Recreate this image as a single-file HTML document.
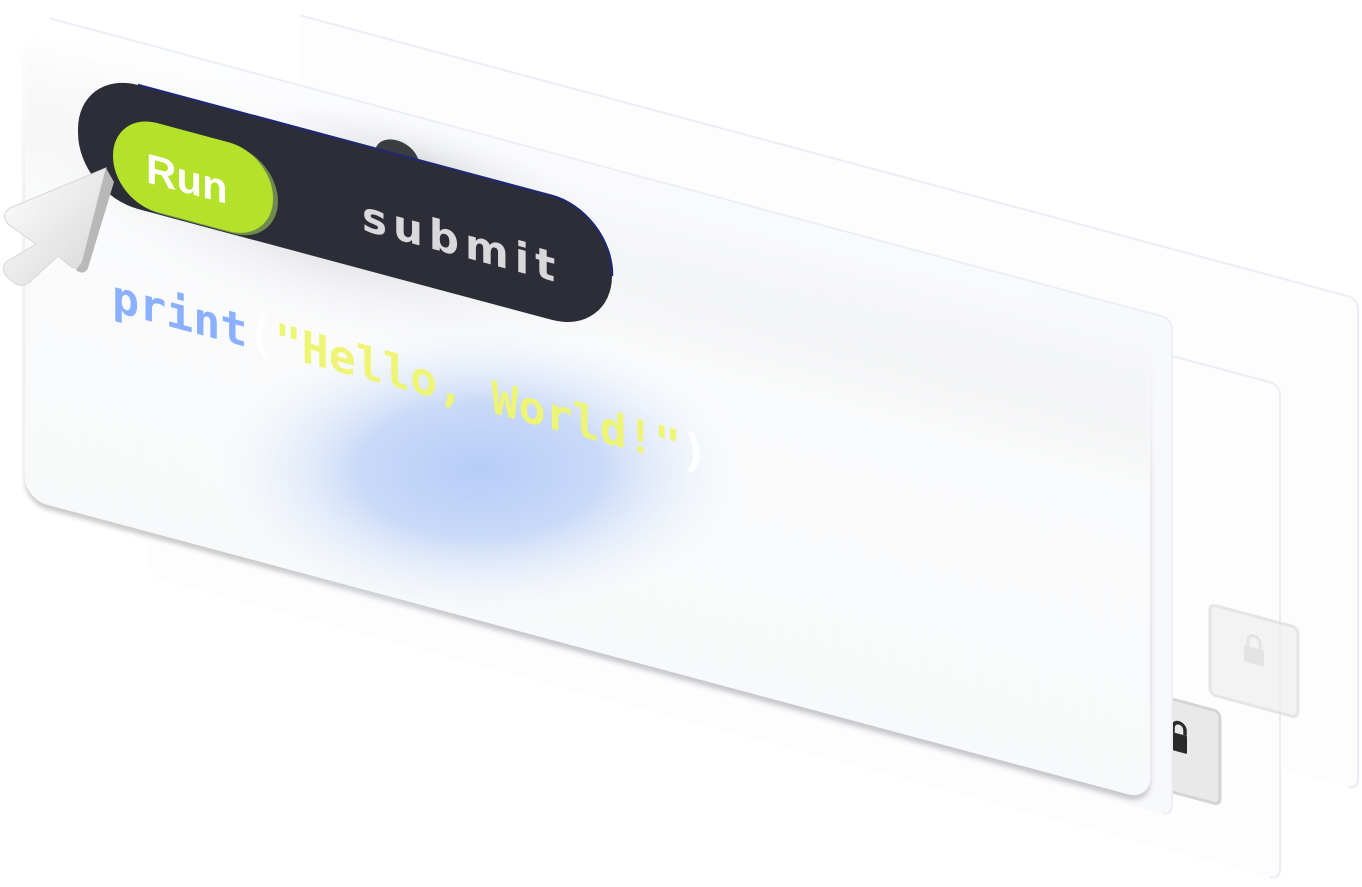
<!DOCTYPE html>
<html><head><meta charset="utf-8"><style>
html,body{margin:0;padding:0;background:#fff;width:1362px;height:887px;overflow:hidden}
svg{display:block}
</style></head><body>
<svg width="1362" height="887" viewBox="0 0 1362 887" xmlns="http://www.w3.org/2000/svg">
<defs>
<radialGradient id="blue" cx="0.5" cy="0.5" r="0.5">
<stop offset="0" stop-color="#b6cdf8"/><stop offset="0.45" stop-color="#c9daf8"/><stop offset="1" stop-color="#f4f7fc" stop-opacity="0"/>
</radialGradient>
<radialGradient id="gshadow" cx="0.5" cy="0.5" r="0.5">
<stop offset="0" stop-color="#dcdddf"/><stop offset="1" stop-color="#f4f5f7" stop-opacity="0"/>
</radialGradient>
<linearGradient id="fadeL" x1="0" y1="0" x2="1" y2="0">
<stop offset="0" stop-color="#ffffff"/><stop offset="0.3" stop-color="#fafbfd"/><stop offset="1" stop-color="#f8f9fb"/>
</linearGradient>
<linearGradient id="cardV" x1="0" y1="0" x2="0" y2="1">
<stop offset="0" stop-color="#fafbfc" stop-opacity="0"/><stop offset="0.35" stop-color="#fafbfc" stop-opacity="1"/><stop offset="1" stop-color="#f8f9fa"/>
</linearGradient>
<filter id="sh" x="-5%" y="-5%" width="110%" height="115%"><feDropShadow dx="0" dy="5" stdDeviation="2.5" flood-color="#000" flood-opacity="0.2"/></filter>
<linearGradient id="cur" x1="0" y1="0" x2="1" y2="1">
<stop offset="0" stop-color="#ffffff"/><stop offset="1" stop-color="#d6d6d6"/>
</linearGradient>
</defs>
<g transform="matrix(1,0.2679,0,1,0,0)">
<rect x="300" y="-65" width="1058" height="491" rx="10" fill="#fdfdfe"/>
<path d="M300 -65 H1348 a10 10 0 0 1 10 10 V416 a10 10 0 0 1 -10 10" fill="none" stroke="#ececf7" stroke-width="2"/>
<rect x="150" y="42" width="1130" height="495" rx="10" fill="#fdfdfe"/>
<path d="M150 42 H1270 a10 10 0 0 1 10 10 V527 a10 10 0 0 1 -10 10" fill="none" stroke="#ececf6" stroke-width="2"/>
<rect x="1210" y="280" width="88" height="90" rx="6" fill="#efefef" stroke="#dcdcdc" stroke-width="3" opacity="0.7"/>
<rect x="1244" y="312" width="20" height="16" rx="1" fill="#e3e3e3"/>
<path d="M1248 312 v-6 a6 6 0 0 1 12 0 v6" fill="none" stroke="#e3e3e3" stroke-width="3"/>
<rect x="1160" y="385" width="60" height="93" rx="6" fill="#e9e9e9" stroke="#d4d4d4" stroke-width="3"/>
<rect x="1171" y="418" width="16" height="18" rx="1" fill="#2a2a2a"/>
<path d="M1173 418 v-5 a6 6 0 0 1 12 0 v5" fill="none" stroke="#2a2a2a" stroke-width="3.5"/>
<rect x="50" y="5" width="1122" height="497" rx="10" fill="url(#fadeL)"/>
<path d="M50 5 H1162 a10 10 0 0 1 10 10 V492 a10 10 0 0 1 -10 10" fill="none" stroke="#eceef8" stroke-width="2"/>
<rect x="25" y="20" width="1125" height="472" rx="22" fill="url(#cardV)" filter="url(#sh)"/>
<ellipse cx="330" cy="150" rx="280" ry="95" fill="url(#gshadow)"/>
<ellipse cx="420" cy="50" rx="180" ry="45" fill="url(#gshadow)"/>
<path d="M375 52 a22 18 0 0 1 44 0 Z" fill="#3a3c40"/>
<rect x="78" y="48" width="534" height="124" rx="60" fill="#2d2d38"/>
<path d="M138 48 H552 a60 62 0 0 1 60 62 v2" fill="none" stroke="#1f2a6e" stroke-width="2.5"/>
<rect x="116" y="83" width="162" height="88" rx="44" fill="#6e8a4e"/>
<rect x="113" y="81" width="160" height="89" rx="44" fill="#b4e22a"/>
<text x="146" y="143" font-family="Liberation Sans, sans-serif" font-size="42" font-weight="bold" fill="#ffffff">Run</text>
<text x="362" y="133" font-family="DejaVu Sans, Liberation Sans, sans-serif" font-size="42" font-weight="bold" letter-spacing="6" fill="#d9d9dc">submit</text>
</g>
<ellipse cx="480" cy="470" rx="270" ry="150" fill="url(#blue)"/>
<g transform="matrix(1,0.2679,0,1,0,0)">
<text x="112" y="281" font-family="DejaVu Sans Mono, Liberation Mono, monospace" font-size="45" font-weight="bold" fill="#eef575"><tspan fill="#8bb0ff">print</tspan><tspan fill="#ffffff">(</tspan>"Hello, World!"<tspan fill="#ffffff">)</tspan></text>
</g>
<path d="M106 168 L10 208 Q0 214 8 224 L36 244 L6 262 Q0 270 8 278 L16 284 Q24 288 32 280 L58 256 L70 266 Q78 272 82 262 Z" fill="url(#cur)" stroke="#d8d8d8" stroke-width="1"/>
<path d="M106 168 L114 182 L88 268 Q84 276 76 270 L82 262 Z" fill="#b8b8b8"/>
</svg>
</body></html>
